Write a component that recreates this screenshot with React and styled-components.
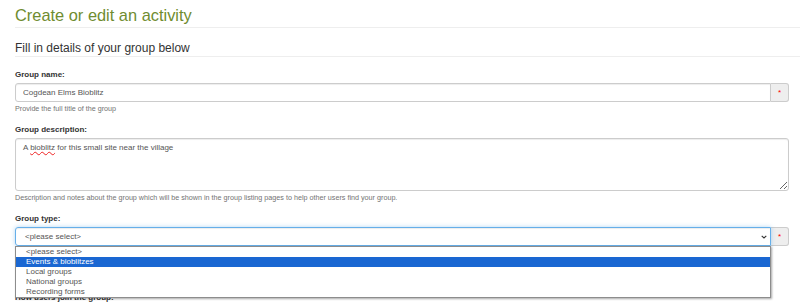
import React from 'react';
import styled, {createGlobalStyle} from 'styled-components';

const GlobalStyle = createGlobalStyle`
  html, body {
    margin: 0;
    background: #fff;
    overflow: hidden;
  }
  body {
    font-family: "Liberation Sans", Arial, sans-serif;
    color: #333;
  }
`;

const PageSt = styled.div`
  padding: 0 11px 0 15px;
`;

const TitleSt = styled.h1`
  margin: 5px -11px 0 0;
  padding-bottom: 2px;
  font-size: 16.4px;
  line-height: 20px;
  font-weight: normal;
  color: #6f8c30;
  border-bottom: 1px solid #eee;
`;

const SubtitleSt = styled.h2`
  margin: 13px -11px 0 0;
  padding-bottom: 1px;
  font-size: 12px;
  line-height: 14px;
  font-weight: normal;
  color: #333;
  border-bottom: 1px solid #eee;
`;

const FormSt = styled.form`
  margin-top: 13px;
`;

const FormGroupSt = styled.div`
  margin-bottom: ${p => p.$gap ?? 12}px;
`;

const LabelSt = styled.label`
  display: block;
  margin-bottom: 4px;
  font-size: 8px;
  line-height: 9px;
  font-weight: bold;
  color: #333;
`;

const InputGroupSt = styled.div`
  display: flex;
`;

const TextInputSt = styled.input`
  flex: 1;
  min-width: 0;
  height: 19px;
  box-sizing: border-box;
  margin: 0;
  padding: 0 7px;
  border: 1px solid #ccc;
  border-radius: 3px 0 0 3px;
  box-shadow: inset 0 1px 1px rgba(0, 0, 0, 0.075);
  font-family: inherit;
  font-size: 8px;
  color: #555;
  outline: none;
`;

const AddonSt = styled.span`
  width: 18px;
  box-sizing: border-box;
  display: flex;
  align-items: center;
  justify-content: center;
  border: 1px solid #ccc;
  border-left: 0;
  border-radius: 0 3px 3px 0;
  background: #eee;
  color: #f00;
  font-size: 8px;
`;

const HelpSt = styled.p`
  margin: 2px 0 0;
  font-size: 7.2px;
  line-height: 9px;
  color: #737373;
`;

// div instead of a textarea so the spelling squiggle can be shown
const TextAreaSt = styled.div`
  height: 53px;
  box-sizing: border-box;
  padding: 4px 7px;
  border: 1px solid #ccc;
  border-radius: 3px;
  box-shadow: inset 0 1px 1px rgba(0, 0, 0, 0.075);
  font-size: 8px;
  line-height: 9px;
  color: #555;
  resize: vertical;
  overflow: auto;
`;

const MisspeltSt = styled.span`
  text-decoration: underline wavy #e22;
  text-decoration-thickness: 1px;
  text-underline-offset: 1px;
`;

const SelectWrapSt = styled.div`
  flex: 1;
  position: relative;
`;

const SelectBoxSt = styled.div`
  height: 19px;
  box-sizing: border-box;
  display: flex;
  align-items: center;
  justify-content: space-between;
  padding: 0 3px 0 9px;
  border: 1px solid #66afe9;
  border-radius: 3px 0 0 3px;
  box-shadow: inset 0 1px 1px rgba(0, 0, 0, 0.075),
    0 0 4px rgba(102, 175, 233, 0.5);
  font-size: 8px;
  color: #555;
`;

const ListboxSt = styled.div`
  position: absolute;
  top: 100%;
  left: 0;
  right: 0;
  z-index: 10;
  background: #fff;
  border: 1px solid #8d8d8d;
  box-shadow: 1px 1px 2px rgba(0, 0, 0, 0.35);
`;

const OptionSt = styled.div`
  height: 10px;
  line-height: 10px;
  padding-left: 10px;
  font-size: 8px;
  white-space: nowrap;
  color: ${p => (p.$active ? '#fff' : '#555')};
  background: ${p => (p.$active ? '#1a67d2' : 'transparent')};
`;

const options = [
  '<please select>',
  'Events & bioblitzes',
  'Local groups',
  'National groups',
  'Recording forms',
];

const Chevron = () => (
  <svg width="6" height="4" viewBox="0 0 6 4">
    <path d="M0.7 0.8 L3 3 L5.3 0.8" fill="none" stroke="#333" strokeWidth="1.1" />
  </svg>
);

export default function App() {
  return (
    <PageSt>
      <GlobalStyle />
      <TitleSt>Create or edit an activity</TitleSt>
      <SubtitleSt>Fill in details of your group below</SubtitleSt>
      <FormSt>
        <FormGroupSt>
          <LabelSt>Group name:</LabelSt>
          <InputGroupSt>
            <TextInputSt defaultValue="Cogdean Elms Bioblitz" />
            <AddonSt>*</AddonSt>
          </InputGroupSt>
          <HelpSt>Provide the full title of the group</HelpSt>
        </FormGroupSt>

        <FormGroupSt>
          <LabelSt>Group description:</LabelSt>
          <TextAreaSt>
            A <MisspeltSt>bioblitz</MisspeltSt> for this small site near the village
          </TextAreaSt>
          <HelpSt>
            Description and notes about the group which will be shown in the
            group listing pages to help other users find your group.
          </HelpSt>
        </FormGroupSt>

        <FormGroupSt $gap={47}>
          <LabelSt>Group type:</LabelSt>
          <InputGroupSt>
            <SelectWrapSt>
              <SelectBoxSt>
                <span>&lt;please select&gt;</span>
                <Chevron />
              </SelectBoxSt>
              {/* open dropdown list lies over the next field */}
              <ListboxSt>
                {options.map((opt, i) => (
                  <OptionSt key={opt} $active={i === 1}>
                    {opt}
                  </OptionSt>
                ))}
              </ListboxSt>
            </SelectWrapSt>
            <AddonSt>*</AddonSt>
          </InputGroupSt>
        </FormGroupSt>

        <FormGroupSt>
          <LabelSt>How users join the group:</LabelSt>
        </FormGroupSt>
      </FormSt>
    </PageSt>
  );
}
